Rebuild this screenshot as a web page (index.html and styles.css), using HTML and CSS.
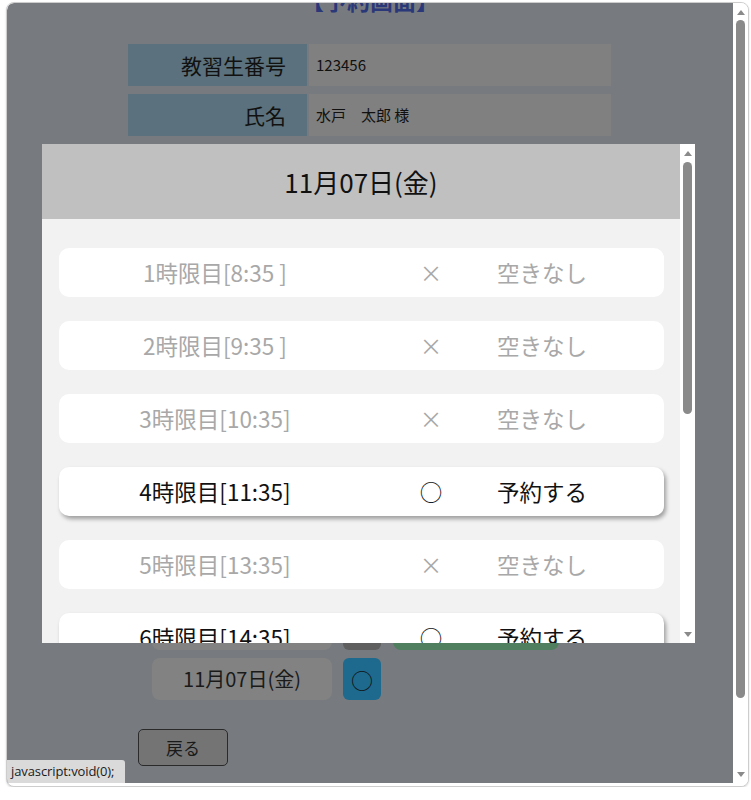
FILE: index.html
```html
<!DOCTYPE html>
<html lang="ja">
<head>
<meta charset="utf-8">
<title>予約画面</title>
<link rel="stylesheet" href="styles.css">
</head>
<body>
<div class="window">
  <div class="page">
    <h1 class="title">【予約画面】</h1>
    <div class="info">
      <div class="info-label">教習生番号</div>
      <div class="info-value">123456</div>
      <div class="info-label">氏名</div>
      <div class="info-value">水戸　太郎 様</div>
    </div>
    <div class="days">
      <div class="day-row"><span class="day">10月29日(水)</span><span class="mark mark-full"></span><a class="reserve" href="javascript:void(0);"></a></div>
      <div class="day-row"><span class="day">10月30日(木)</span><span class="mark mark-full"></span><a class="reserve" href="javascript:void(0);"></a></div>
      <div class="day-row"><span class="day">10月31日(金)</span><span class="mark mark-full"></span><a class="reserve" href="javascript:void(0);"></a></div>
      <div class="day-row"><span class="day">11月01日(土)</span><span class="mark mark-full"></span><a class="reserve" href="javascript:void(0);"></a></div>
      <div class="day-row"><span class="day">11月03日(月)</span><span class="mark mark-full"></span><a class="reserve" href="javascript:void(0);"></a></div>
      <div class="day-row"><span class="day">11月04日(火)</span><span class="mark mark-full"></span><a class="reserve" href="javascript:void(0);"></a></div>
      <div class="day-row"><span class="day">11月05日(水)</span><span class="mark mark-full"></span><a class="reserve" href="javascript:void(0);"></a></div>
      <div class="day-row"><span class="day">11月06日(木)</span><span class="mark mark-full"></span><a class="reserve" href="javascript:void(0);"></a></div>
      <div class="day-row"><span class="day">11月07日(金)</span><span class="mark mark-open">○</span></div>
    </div>
    <button class="back" type="button">戻る</button>

    <div class="modal">
      <div class="modal-body">
        <div class="modal-head">11月07日(金)</div>
        <div class="slots">
          <div class="slot slot-full"><span class="slot-time">1時限目[8:35 ]</span><span class="slot-mark">×</span><span class="slot-state">空きなし</span></div>
          <div class="slot slot-full"><span class="slot-time">2時限目[9:35 ]</span><span class="slot-mark">×</span><span class="slot-state">空きなし</span></div>
          <div class="slot slot-full"><span class="slot-time">3時限目[10:35]</span><span class="slot-mark">×</span><span class="slot-state">空きなし</span></div>
          <div class="slot slot-open"><span class="slot-time">4時限目[11:35]</span><span class="slot-mark">○</span><span class="slot-state">予約する</span></div>
          <div class="slot slot-full"><span class="slot-time">5時限目[13:35]</span><span class="slot-mark">×</span><span class="slot-state">空きなし</span></div>
          <div class="slot slot-open"><span class="slot-time">6時限目[14:35]</span><span class="slot-mark">○</span><span class="slot-state">予約する</span></div>
        </div>
      </div>
      <div class="scrollbar scrollbar-inner">
        <span class="arrow-up"></span>
        <span class="thumb"></span>
        <span class="fill"></span>
        <span class="arrow-down"></span>
      </div>
    </div>

    <div class="statusbar">javascript:void(0);</div>
  </div>
  <div class="scrollbar scrollbar-outer">
    <span class="arrow-up"></span>
    <span class="thumb"></span>
    <span class="fill"></span>
    <span class="arrow-down"></span>
  </div>
</div>
</body>
</html>
```
FILE: styles.css
```css
* { box-sizing: border-box; }

html, body {
  margin: 0;
  padding: 0;
  background: #ffffff;
}

body {
  font-family: "Noto Sans CJK JP", "Noto Sans", sans-serif;
  color: #111;
}

.window {
  margin: 2px 0 0 6px;
  width: 743px;
  height: 785px;
  border: 1px solid #cdcdcd;
  border-radius: 8px;
  background: #ffffff;
  overflow: hidden;
  display: flex;
  box-shadow: 0 1px 2px rgba(0, 0, 0, 0.15);
}

.page {
  position: relative;
  width: 726px;
  height: 780px;
  background: #777b7f;
  overflow: hidden;
  border-top-left-radius: 7px;
}

.title {
  margin: -18px 0 0;
  height: 30px;
  font-size: 23px;
  line-height: 30px;
  font-weight: bold;
  text-align: center;
  color: #2a3778;
}

.info {
  margin: 29px 0 0 121px;
  display: grid;
  grid-template-columns: 179px 302px;
  grid-auto-rows: 42px;
  column-gap: 2px;
  row-gap: 8px;
}

.info-label {
  background: #5b717d;
  font-size: 21px;
  line-height: 42px;
  text-align: right;
  padding-right: 21px;
  color: #111;
}

.info-value {
  background: #808080;
  font-size: 15px;
  line-height: 42px;
  padding-left: 7px;
  color: #111;
}

.days {
  margin: 122px 0 0 145px;
  display: flex;
  flex-direction: column;
  gap: 8px;
}

.day-row {
  display: flex;
  gap: 11px;
  height: 42px;
}

.day {
  width: 180px;
  background: #828282;
  border-radius: 8px;
  font-size: 20px;
  line-height: 42px;
  text-align: center;
  color: #1a1a1a;
}

.mark {
  width: 38px;
  border-radius: 6px;
  font-size: 22px;
  line-height: 42px;
  text-align: center;
  color: #111;
}

.mark-full { background: #5f5f5f; }
.mark-open { background: #1e6a8e; }

.reserve {
  display: block;
  margin-left: 1px;
  width: 166px;
  border-radius: 8px;
  background: #4f7f5f;
}

.back {
  display: block;
  margin: 29px 0 0 131px;
  width: 90px;
  height: 37px;
  border: 1px solid #2a2a2a;
  border-radius: 5px;
  background: #747474;
  font-family: "Noto Sans CJK JP", sans-serif;
  font-size: 17px;
  color: #1a1a1a;
  padding: 0;
}

/* modal */
.modal {
  position: absolute;
  left: 35px;
  top: 141px;
  width: 653px;
  height: 499px;
  display: flex;
  background: #f2f2f2;
}

.modal-body {
  width: 638px;
  height: 499px;
  overflow: hidden;
}

.modal-head {
  height: 75px;
  background: #c0c0c0;
  font-size: 26px;
  line-height: 75px;
  text-align: center;
  color: #111;
}

.slots {
  padding: 29px 16px 0 17px;
  display: flex;
  flex-direction: column;
  gap: 24px;
}

.slot {
  flex: none;
  height: 49px;
  border-radius: 10px;
  background: #ffffff;
  display: grid;
  grid-template-columns: 312px 120px 1fr;
  align-items: center;
  font-size: 22.5px;
  line-height: 49px;
}

.slot-time { text-align: center; }
.slot-mark { text-align: center; }
.slot-state { padding-left: 6px; }

.slot-full { color: #a8a8a8; }
.slot-open {
  color: #111;
  box-shadow: 2px 3px 4px rgba(0, 0, 0, 0.35);
}

/* scrollbars */
.scrollbar {
  width: 15px;
  display: flex;
  flex-direction: column;
  align-items: center;
  background: #ffffff;
}

.arrow-up {
  width: 0;
  height: 0;
  border-left: 4px solid transparent;
  border-right: 4px solid transparent;
  border-bottom: 5px solid #8a8a8a;
}

.arrow-down {
  width: 0;
  height: 0;
  border-left: 4px solid transparent;
  border-right: 4px solid transparent;
  border-top: 5px solid #8a8a8a;
}

.thumb {
  width: 9px;
  border-radius: 5px;
  background: #8a8a8a;
}

.fill { flex: 1; }

.scrollbar-inner { height: 499px; padding: 7px 0 6px; }
.scrollbar-inner .thumb { margin-top: 6px; height: 252px; }

.scrollbar-outer { height: 783px; padding: 7px 0 9px; }
.scrollbar-outer .thumb { margin-top: 5px; height: 678px; }

.statusbar {
  position: absolute;
  left: 0;
  bottom: 0;
  width: 118px;
  height: 23px;
  background: #dadada;
  border-top-right-radius: 3px;
  font-family: "Open Sans", "Noto Sans", sans-serif;
  font-size: 13px;
  line-height: 23px;
  padding-left: 4px;
  color: #1a1a1a;
  white-space: nowrap;
  letter-spacing: -0.1px;
}
```
